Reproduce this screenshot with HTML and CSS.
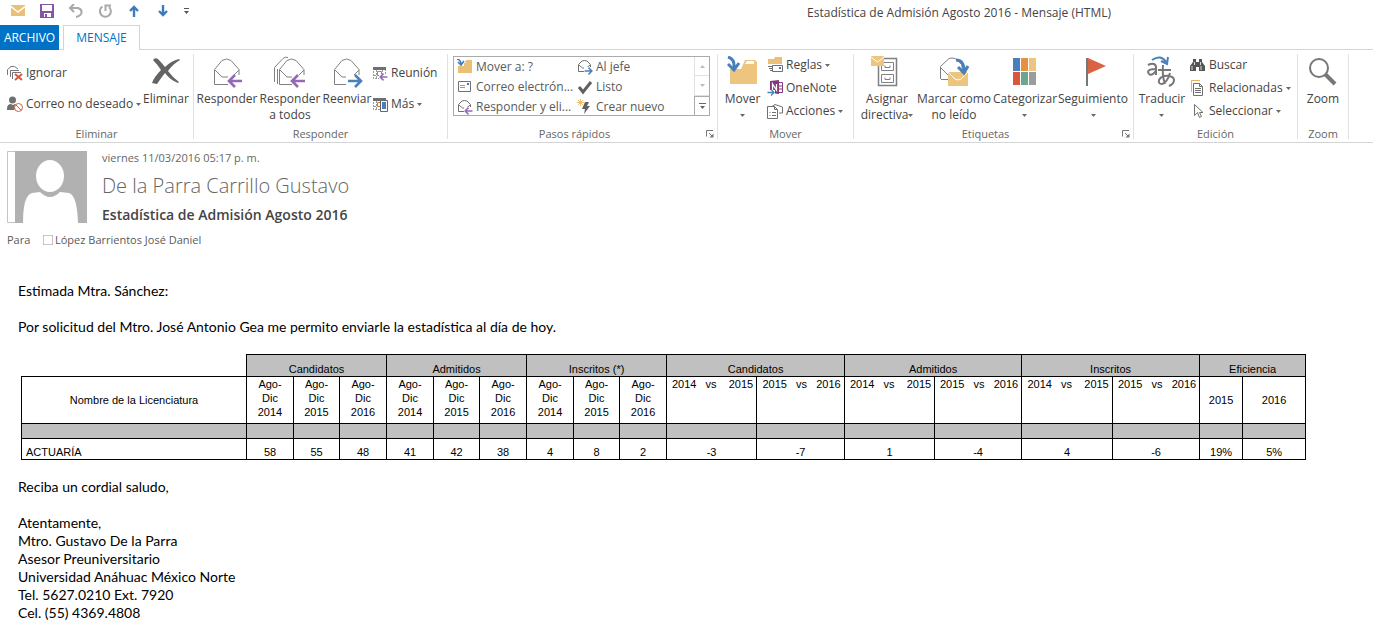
FILE: index.html
```html
<!DOCTYPE html>
<html lang="es">
<head>
<meta charset="utf-8">
<title>Estadística de Admisión Agosto 2016 - Mensaje (HTML)</title>
<link rel="stylesheet" href="styles.css">
</head>
<body>
<svg class="defs" aria-hidden="true">
  <symbol id="caret" viewBox="0 0 5 3"><path d="M0 0h5L2.500 3z" fill="#6a6a6a"/></symbol>
  <symbol id="launcher" viewBox="0 0 8 8"><path d="M.5 6.500V.5H7M3 3l3 3" fill="none" stroke="#777"/><path d="M7.500 3.500v4h-4z" fill="#777"/></symbol>
  <symbol id="envelope" viewBox="0 0 32 32"><path d="M3.500 28.500V13.500L11 4.500q4.500-3 9 0l8 9v15zM4 14l7 7h10l7-7" fill="#fff" stroke="#808080"/></symbol>
  <symbol id="arrow-left" viewBox="0 0 16 14"><path d="M15 7H3M8 1L2 7l6 6" fill="none" stroke="#9668b8" stroke-width="2.600"/></symbol>
  <symbol id="arrow-right" viewBox="0 0 16 14"><path d="M1 7h12M8 1l6 6-6 6" fill="none" stroke="#4a80ba" stroke-width="2.600"/></symbol>
  <symbol id="small-envelope" viewBox="0 0 16 16"><path d="M1.500 12.500V5.500L5 2q2.500-1 5 0l3.500 3.500v7zM2 6l3.500 3h4L13 6" fill="#fff" stroke="#707070"/></symbol>
  <symbol id="calendar" viewBox="0 0 16 16"><path d="M1.500 3v10.500h12V3M4.500 5v8M10.500 5v8M2 10.500h11" fill="none" stroke="#999" stroke-dasharray="2 1"/><path d="M1 2h13v3H1z" fill="#707070"/><path d="M5.500 6.500h4v4h-4z" fill="#fff" stroke="#e07a28"/></symbol>
</svg>

<header>
  <div class="titlebar">
    <div class="quick">
      <button aria-label="Correo"><svg width="14" height="12" viewBox="0 0 14 12"><path d="M0 0h14v11H0z" fill="#eabf78"/><path d="M0 1.500l7 5.500 7-5.500" fill="none" stroke="#fff" stroke-width="1.500"/></svg></button>
      <button aria-label="Guardar"><svg width="14" height="14" viewBox="0 0 14 14"><path d="M0 0h14v14H0z" fill="#8655a8"/><path d="M2 1h10v6H2zM4 9h7v4H4z" fill="#fff"/><path d="M5 10h2v3H5z" fill="#8655a8"/></svg></button>
      <button aria-label="Deshacer"><svg width="15" height="14" viewBox="0 0 15 14"><path d="M2 4h8q4 1 3.500 5-1 3-5.500 4M6 0L2 4l4 4" fill="none" stroke="#a9a9a9" stroke-width="2"/></svg></button>
      <button aria-label="Rehacer"><svg width="14" height="14" viewBox="0 0 14 14"><path d="M4.500 2.500A5.500 5.500 0 1 0 11 3M7.500 7V1.500H13" fill="none" stroke="#a9a9a9" stroke-width="2"/></svg></button>
      <button aria-label="Anterior"><svg width="10" height="12" viewBox="0 0 10 12"><path d="M5 12V2M1 6l4-4 4 4" fill="none" stroke="#3f7abd" stroke-width="2.400"/></svg></button>
      <button aria-label="Siguiente"><svg width="10" height="12" viewBox="0 0 10 12"><path d="M5 0v10M1 6l4 4 4-4" fill="none" stroke="#3f7abd" stroke-width="2.400"/></svg></button>
      <button class="more" aria-label="Personalizar"><svg width="5" height="6" viewBox="0 0 5 6"><path d="M0 0h5v1H0zM0 3h5L2.500 6z" fill="#555"/></svg></button>
    </div>
    <div class="title">Estadística de Admisión Agosto 2016 - Mensaje (HTML)</div>
  </div>
  <nav class="tabs">
    <button class="tab file">ARCHIVO</button>
    <button class="tab active">MENSAJE</button>
  </nav>
  <div class="ribbon">
    <section class="group g-delete">
      <div class="tools">
        <div class="stack two">
          <button class="small"><svg width="16" height="16" viewBox="0 0 16 16"><path d="M.5 10V4.500L4 1.500h3.500L11 4M3.500 12V5.500H12M5.500 14V7.500H14" fill="none" stroke="#777"/><path d="M8 9l7 6M15 9l-7 6" stroke="#d9583b" stroke-width="2"/></svg>Ignorar</button>
          <button class="small"><svg width="16" height="16" viewBox="0 0 16 16"><circle cx="5.500" cy="4" r="3.500" fill="#707070"/><path d="M0 13q0-5 4-5l2 1 2-1q2 0 3 2l-4 4H0z" fill="#707070"/><circle cx="11.500" cy="11.500" r="4" fill="#fff" stroke="#d9583b"/><path d="M9 9l5 5" stroke="#d9583b"/></svg>Correo no deseado<svg class="caret"><use href="#caret"/></svg></button>
        </div>
        <button class="big"><svg width="32" height="32" viewBox="0 0 32 32"><path d="M3 4q2-3 5-1 3 3 7 8 6-6 14-8l1 1q-7 4-12 11 5 7 11 11l-1 1q-8-3-13-10-4 5-8 11l-5-1q2-6 9-13Q7 8 3 4z" fill="#646464"/></svg><span>Eliminar</span></button>
      </div>
      <footer><h2>Eliminar</h2></footer>
    </section>
    <section class="group g-reply">
      <div class="tools">
        <button class="big"><svg width="32" height="32" viewBox="0 0 32 32"><use href="#envelope"/><path d="M17 19h15v13H17z" fill="#fff"/><use href="#arrow-left" x="16" y="18" width="16" height="14"/></svg><span>Responder</span></button>
        <button class="big"><svg width="34" height="32" viewBox="0 0 34 32"><path d="M1.500 26V11.500L10 2.500q2-2 5-1M4.500 28V13" fill="none" stroke="#808080"/><use href="#envelope" x="3" width="32" height="32"/><path d="M19 19h15v13H19z" fill="#fff"/><use href="#arrow-left" x="17" y="18" width="16" height="14"/></svg><span>Responder<br>a todos</span></button>
        <button class="big"><svg width="32" height="32" viewBox="0 0 32 32"><use href="#envelope"/><path d="M15 19h17v13H15z" fill="#fff"/><use href="#arrow-right" x="16" y="18" width="16" height="14"/></svg><span>Reenviar</span></button>
        <div class="stack two">
          <button class="small"><svg width="16" height="16" viewBox="0 0 16 16"><use href="#calendar"/><path d="M7 9h9v7H7z" fill="#fff"/><use href="#arrow-left" x="7" y="8" width="9" height="8"/></svg>Reunión</button>
          <button class="small"><svg width="16" height="16" viewBox="0 0 16 16"><use href="#calendar"/><path d="M8.500 4.500h7v11h-7z" fill="#fff" stroke="#666"/><path d="M10 6h4v7h-4z" fill="#4a80ba"/></svg>Más<svg class="caret"><use href="#caret"/></svg></button>
        </div>
      </div>
      <footer><h2>Responder</h2></footer>
    </section>
    <section class="group g-steps">
      <div class="gallery">
        <div class="steps">
          <button class="small"><svg width="16" height="16" viewBox="0 0 16 16"><path d="M1 4h7l1-3h6v13H1z" fill="#eabf78"/><path d="M-1-1h8v8h-8z" fill="#fff"/><path d="M0 0q4 1 4 5M1 3l3 3 3-4" fill="none" stroke="#3f7abd" stroke-width="1.600"/></svg>Mover a: ?</button>
          <button class="small"><svg width="16" height="16" viewBox="0 0 16 16"><use href="#small-envelope"/><path d="M7 8h9v8H7z" fill="#fff"/><use href="#arrow-right" x="7" y="8" width="9" height="8"/></svg>Al jefe</button>
          <button class="small"><svg width="16" height="16" viewBox="0 0 16 16"><path d="M1.500 2.500h12v10h-12z" fill="#fff" stroke="#707070"/><path d="M3 6.500h5M3 8.500h5" stroke="#999"/><path d="M10 4h2v2h-2z" fill="#3f7abd"/></svg>Correo electrón...</button>
          <button class="small"><svg width="16" height="16" viewBox="0 0 16 16"><path d="M2 8l4 5 8-10" fill="none" stroke="#606060" stroke-width="3"/></svg>Listo</button>
          <button class="small"><svg width="16" height="16" viewBox="0 0 16 16"><use href="#small-envelope"/><path d="M7 8h9v8H7z" fill="#fff"/><use href="#arrow-left" x="7" y="8" width="9" height="8"/></svg>Responder y eli...</button>
          <button class="small"><svg width="16" height="16" viewBox="0 0 16 16"><path d="M3.500 0v7M0 3.500h7M1 1l5 5M6 1L1 6" stroke="#eabf78"/><path d="M8 3h4l-2 4h3l-6 8 1-5H5z" fill="#606060"/></svg>Crear nuevo</button>
        </div>
        <div class="scroll">
          <button aria-label="Subir"><svg width="5" height="3" viewBox="0 0 5 3"><path d="M0 3h5L2.500 0z" fill="#bbb"/></svg></button>
          <button aria-label="Bajar"><svg width="5" height="3" viewBox="0 0 5 3"><path d="M0 0h5L2.500 3z" fill="#bbb"/></svg></button>
          <button class="expand" aria-label="Más pasos"><svg width="7" height="6" viewBox="0 0 7 6"><path d="M0 0h7v1H0zM1 3h5L3.500 6z" fill="#666"/></svg></button>
        </div>
      </div>
      <footer><h2>Pasos rápidos</h2><button class="launch" aria-label="Opciones de pasos rápidos"><svg width="8" height="8"><use href="#launcher"/></svg></button></footer>
    </section>
    <section class="group g-move">
      <div class="tools">
        <button class="big"><svg width="32" height="32" viewBox="0 0 32 32"><path d="M3 13h11l4-9h10l2 2v22H3z" fill="#edc57f"/><path d="M18 8l2-3h7v3z" fill="#fff"/><path d="M1 1q7 2 6 11M1 8l6 6 5-7" fill="none" stroke="#4a80ba" stroke-width="3"/></svg><span>Mover<br><svg class="caret"><use href="#caret"/></svg></span></button>
        <div class="stack">
          <button class="small"><svg width="16" height="16" viewBox="0 0 16 16"><path d="M1 2h6l1-2h7v7H1z" fill="#eabf78"/><path d="M5.500 8.500h10v6h-10z" fill="#fff" stroke="#707070"/><path d="M1 9.500h4M2 11.500h3M3 13.500h2" stroke="#707070"/><path d="M12 10h2v2h-2z" fill="#3f7abd"/></svg>Reglas<svg class="caret"><use href="#caret"/></svg></button>
          <button class="small"><svg width="16" height="16" viewBox="0 0 16 16"><path d="M11 2.500h4.500v10H11M11 6h4M11 9h4" fill="#fff" stroke="#80397b"/><path d="M3 1l9-1v14l-9-1z" fill="#80397b"/><path d="M5.500 10V4l4 6V4" fill="none" stroke="#fff" stroke-width="1.300"/><path d="M0 10h8v6H0z" fill="#fff"/><use href="#arrow-right" x="0" y="9" width="8" height="7"/></svg>OneNote</button>
          <button class="small"><svg width="16" height="16" viewBox="0 0 16 16"><path d="M5 3.500q3-3.500 6-1l4.500 1.500v6H12" fill="#fff" stroke="#707070"/><path d="M.5 3.500h7l3 3v9H.5zM7.500 3.500v3h3" fill="#fff" stroke="#707070"/><path d="M2.500 9.500h1M5 9.500h4M2.500 12.500h1M5 12.500h4" stroke="#707070"/></svg>Acciones<svg class="caret"><use href="#caret"/></svg></button>
        </div>
      </div>
      <footer><h2>Mover</h2></footer>
    </section>
    <section class="group g-tags">
      <div class="tools">
        <button class="big"><svg width="32" height="32" viewBox="0 0 32 32"><path d="M7.500 2.500h18v27h-18z" fill="#fff" stroke="#808080" stroke-width="1.500"/><path d="M10.500 6.500h12v8h-12zM10.500 18.500h12v8h-12zM14 9.500v2h5v-2M14 21.500v2h5v-2" fill="none" stroke="#808080"/><path d="M0 0h13v10H0z" fill="#edc57f"/><path d="M0 1l6.500 5L13 1" fill="none" stroke="#fff"/></svg><span>Asignar<br>directiva<svg class="caret"><use href="#caret"/></svg></span></button>
        <button class="big"><svg width="32" height="32" viewBox="0 0 32 32"><path d="M2.500 23V10.500L11 2.500q3-1 6 0l7 6V20M3 23.500h7M3 12l7 7" fill="none" stroke="#808080"/><path d="M10 16h20v14H10z" fill="#edc57f"/><path d="M10 16l7 7q3 2 6 0l7-7" fill="none" stroke="#fff"/><path d="M18 4q8 0 8 11M20 11l6 6 4-7" fill="none" stroke="#4a80ba" stroke-width="3"/></svg><span>Marcar como<br>no leído</span></button>
        <button class="big"><svg width="32" height="32" viewBox="0 0 32 32"><path d="M4 2h7v13H4z" fill="#4a80ba"/><path d="M12 2h7v13h-7z" fill="#e88f42"/><path d="M20 2h7v13h-7z" fill="#edc57f"/><path d="M4 16h7v13H4z" fill="#d9583b"/><path d="M12 16h7v13h-7z" fill="#6da590"/><path d="M20 16h7v13h-7z" fill="#9c9c9c"/></svg><span>Categorizar<br><svg class="caret"><use href="#caret"/></svg></span></button>
        <button class="big"><svg width="32" height="32" viewBox="0 0 32 32"><path d="M9 2h2v28H9z" fill="#777"/><path d="M11 2l18 8-18 8z" fill="#d96444"/></svg><span>Seguimiento<br><svg class="caret"><use href="#caret"/></svg></span></button>
      </div>
      <footer><h2>Etiquetas</h2><button class="launch" aria-label="Opciones de etiquetas"><svg width="8" height="8"><use href="#launcher"/></svg></button></footer>
    </section>
    <section class="group g-edit">
      <div class="tools">
        <button class="big"><svg width="32" height="32" viewBox="0 0 32 32"><path d="M2 9q4-2 6-1 2 1 2 3v8M10 13q-8 0-8 3 1 4 5 2l3-3M12 14h13M17 9q-1 11 2 19M24 17q-3 10-8 11-4 0-3-4 3-5 10-4 5 1 5 4 0 4-5 6" fill="none" stroke="#777" stroke-width="2"/><path d="M6 4q9-6 14 2M15 5l6 3 1-7" fill="none" stroke="#4a80ba" stroke-width="2"/></svg><span>Traducir<br><svg class="caret"><use href="#caret"/></svg></span></button>
        <div class="stack">
          <button class="small"><svg width="16" height="16" viewBox="0 0 16 16"><path d="M3 2h3v3h3V2h3v3l3 4v5H9v-4H6v4H0V9l3-4z" fill="#555"/><path d="M2 9v4M11 9v4M4.500 5v3M10.500 5v3" stroke="#ddd"/></svg>Buscar</button>
          <button class="small"><svg width="16" height="16" viewBox="0 0 16 16"><path d="M1.500 12V.5H10" fill="none" stroke="#e6b35c"/><path d="M3.500 3.500h6l3 3v9h-9z" fill="#fff" stroke="#707070"/><path d="M9.500 3.500v3h3M5 8.500h6M5 10.500h6M5 12.500h6" fill="none" stroke="#707070"/></svg>Relacionadas<svg class="caret"><use href="#caret"/></svg></button>
          <button class="small"><svg width="16" height="16" viewBox="0 0 16 16"><path d="M4.500 1.500v11l3-3 2 5 2-1-2-4h3.500z" fill="#fff" stroke="#707070"/></svg>Seleccionar<svg class="caret"><use href="#caret"/></svg></button>
        </div>
      </div>
      <footer><h2>Edición</h2></footer>
    </section>
    <section class="group g-zoom">
      <div class="tools">
        <button class="big"><svg width="32" height="32" viewBox="0 0 32 32"><circle cx="12" cy="12" r="9" fill="#fff" stroke="#777" stroke-width="2"/><path d="M18 18l10 10" stroke="#777" stroke-width="4"/></svg><span>Zoom</span></button>
      </div>
      <footer><h2>Zoom</h2></footer>
    </section>
  </div>
</header>

<main>
  <section class="message-head">
    <svg class="avatar" width="80" height="72" viewBox="0 0 80 72"><path d="M.5.5h8v71h-8z" fill="#fff" stroke="#c4c4c4"/><path d="M8 0h72v72H8z" fill="#b1b1b1"/><ellipse cx="43" cy="25" rx="14" ry="16" fill="#fff"/><path d="M16 72q0-28 9-30l8-1q10 10 20 0l9 1q8 2 9 30z" fill="#fff"/></svg>
    <div class="meta">
      <div class="date">viernes 11/03/2016 05:17 p. m.</div>
      <div class="sender">De la Parra Carrillo Gustavo</div>
      <h1>Estadística de Admisión Agosto 2016</h1>
    </div>
  </section>
  <div class="recipients"><span class="to">Para</span><span class="presence"></span><span>López Barrientos José Daniel</span></div>

  <article class="body">
    <p>Estimada Mtra. Sánchez:</p>
    <p>Por solicitud del Mtro. José Antonio Gea me permito enviarle la estadística al día de hoy.</p>
    <table>
      <colgroup>
        <col class="c-name">
        <col class="c-term"><col class="c-term-mid"><col class="c-term">
        <col class="c-term"><col class="c-term-mid"><col class="c-term">
        <col class="c-term"><col class="c-term-mid"><col class="c-term">
        <col class="c-first"><col class="c-second">
        <col class="c-first"><col class="c-narrow">
        <col class="c-wide"><col class="c-narrow">
        <col class="c-eff"><col class="c-eff-last">
      </colgroup>
      <thead>
        <tr class="bands"><td class="blank"></td><th colspan="3">Candidatos</th><th colspan="3">Admitidos</th><th colspan="3">Inscritos (*)</th><th colspan="2">Candidatos</th><th colspan="2">Admitidos</th><th colspan="2">Inscritos</th><th colspan="2">Eficiencia</th></tr>
        <tr class="columns"><th>Nombre de la Licenciatura</th><th class="term">Ago-<br>Dic<br>2014</th><th class="term">Ago-<br>Dic<br>2015</th><th class="term">Ago-<br>Dic<br>2016</th><th class="term">Ago-<br>Dic<br>2014</th><th class="term">Ago-<br>Dic<br>2015</th><th class="term">Ago-<br>Dic<br>2016</th><th class="term">Ago-<br>Dic<br>2014</th><th class="term">Ago-<br>Dic<br>2015</th><th class="term">Ago-<br>Dic<br>2016</th><th class="vs">2014   vs    2015</th><th class="vs">2015   vs   2016</th><th class="vs">2014   vs    2015</th><th class="vs">2015   vs   2016</th><th class="vs">2014   vs    2015</th><th class="vs">2015   vs   2016</th><th>2015</th><th>2016</th></tr>
      </thead>
      <tbody>
        <tr class="spacer"><td></td><td></td><td></td><td></td><td></td><td></td><td></td><td></td><td></td><td></td><td></td><td></td><td></td><td></td><td></td><td></td><td></td><td></td></tr>
        <tr class="data"><th>ACTUARÍA</th><td>58</td><td>55</td><td>48</td><td>41</td><td>42</td><td>38</td><td>4</td><td>8</td><td>2</td><td>-3</td><td>-7</td><td>1</td><td>-4</td><td>4</td><td>-6</td><td>19%</td><td>5%</td></tr>
      </tbody>
    </table>
    <p>Reciba un cordial saludo,</p>
    <p>Atentamente,<br>Mtro. Gustavo De la Parra<br>Asesor Preuniversitario<br>Universidad Anáhuac México Norte<br>Tel. 5627.0210 Ext. 7920<br>Cel. (55) 4369.4808</p>
  </article>
</main>
</body>
</html>
```
FILE: styles.css
```css
* { box-sizing: border-box; }
body {
  margin: 0;
  background: #fff;
  color: #444;
  font: 12px/16px "Open Sans", "Noto Sans", sans-serif;
}
button {
  border: 0;
  padding: 0;
  background: none;
  color: inherit;
  font: inherit;
  white-space: nowrap;
}
svg { flex: none; }
.defs { position: absolute; width: 0; height: 0; }

.titlebar { display: flex; justify-content: space-between; height: 25px; }
.quick { display: flex; padding-left: 3px; }
.quick button {
  display: flex;
  align-items: center;
  justify-content: center;
  width: 29px;
  height: 22px;
}
.quick .more { width: 18px; }
.title { margin-right: 262px; line-height: 26px; white-space: nowrap; }

.tabs { display: flex; gap: 4px; height: 25px; border-bottom: 1px solid #d4d4d4; }
.tab { height: 25px; color: #0072c6; }
.tab.file { width: 59px; background: #0072c6; color: #fff; }
.tab.active {
  width: 77px;
  border: 1px solid #d4d4d4;
  border-bottom: 0;
  background: #fff;
}

.ribbon { display: flex; padding: 4px 0 3px; border-bottom: 1px solid #d4d4d4; }
.group {
  display: flex;
  flex: none;
  flex-direction: column;
  justify-content: space-between;
  height: 85px;
  border-right: 1px solid #e1e1e1;
}
.g-delete { width: 194px; }
.g-reply { width: 254px; }
.g-steps { width: 270px; }
.g-move { width: 136px; }
.g-tags { width: 280px; }
.g-edit { width: 164px; }
.g-zoom { width: 51px; }
.tools { display: grid; height: 70px; }
.g-delete .tools { grid-template-columns: 133px 52px; padding-left: 7px; }
.g-reply .tools { grid-template-columns: 62px 64px 50px 1fr; padding-left: 2px; }
.g-move .tools { grid-template-columns: 49px 1fr; }
.g-tags .tools { grid-template-columns: 62px 72px 70px 66px; padding-left: 2px; }
.g-edit .tools { grid-template-columns: 56px 1fr; }

.big {
  display: flex;
  flex-direction: column;
  align-items: center;
  gap: 3px;
  padding-top: 2px;
}
.caret { width: 5px; height: 3px; margin-left: 3px; vertical-align: middle; }
br + .caret { margin-left: 0; }
.stack { display: flex; flex-direction: column; gap: 1px; }
.small { display: flex; align-items: center; gap: 3px; height: 22px; }
.small .caret { margin-left: 0; }
.stack.two { gap: 9px; padding-top: 8px; }

.group footer { display: flex; align-items: center; height: 10px; }
.group h2 {
  flex: 1;
  margin: 0;
  color: #666;
  font-size: 11px;
  font-weight: 400;
  line-height: 12px;
  text-align: center;
}
.launch { display: flex; justify-content: flex-end; width: 13px; margin-right: 3px; }

.gallery {
  display: flex;
  height: 60px;
  margin: 2px 7px 0 5px;
  border: 1px solid #ababab;
}
.steps { display: grid; flex: 1; grid-template-columns: 120px 1fr; padding-left: 3px; color: #5a5a5a; }
.steps .small { height: 20px; }
.scroll { display: flex; flex-direction: column; width: 15px; }
.scroll button {
  display: flex;
  flex: 1;
  align-items: center;
  justify-content: center;
  border-bottom: 1px solid #e1e1e1;
  border-left: 1px solid #e1e1e1;
}
.scroll .expand { border-top: 1px solid #ababab; border-left-color: #ababab; border-bottom: 0; }

.message-head { display: flex; gap: 15px; padding: 8px 7px 0; }
.date { color: #666; font-size: 11px; line-height: 14px; }
.sender { color: #666; font-size: 20px; font-weight: 300; line-height: 42px; }
h1 { margin: 0; font-size: 14px; font-weight: 600; line-height: 16px; }
.recipients {
  display: flex;
  align-items: center;
  padding: 9px 7px 0;
  color: #5a5a5a;
  font-size: 11px;
}
.to { width: 36px; }
.presence { width: 10px; height: 10px; margin-right: 2px; border: 1px solid #c4c4c4; }

.body { padding: 34px 18px 0; color: #000; font: 14px/18px Lato, sans-serif; }
.body p { margin: 0 0 18px; }
table {
  width: 1284px;
  margin: 0 0 18px 3px;
  border-collapse: collapse;
  table-layout: fixed;
  font: 11px/14px "Liberation Sans", Arial, sans-serif;
  text-align: center;
}
th, td { padding: 0; border: 1px solid #000; font-weight: 400; }
.blank { border-top: 0; border-left: 0; }
.c-name { width: 225px; }
.c-term { width: 47px; }
.c-term-mid { width: 46px; }
.c-first { width: 90px; }
.c-second { width: 88px; }
.c-wide { width: 91px; }
.c-narrow { width: 87px; }
.c-eff { width: 43px; }
.c-eff-last { width: 63px; }
.bands { height: 22px; vertical-align: bottom; }
.bands th { background: #c0c0c0; }
.columns { height: 47px; }
.columns .term { padding-bottom: 4px; }
.columns .vs { padding-left: 2px; vertical-align: top; white-space: pre; }
.spacer { height: 15px; background: #c0c0c0; }
.data { height: 21px; vertical-align: bottom; }
.data th { padding-left: 4px; text-align: left; }
```
